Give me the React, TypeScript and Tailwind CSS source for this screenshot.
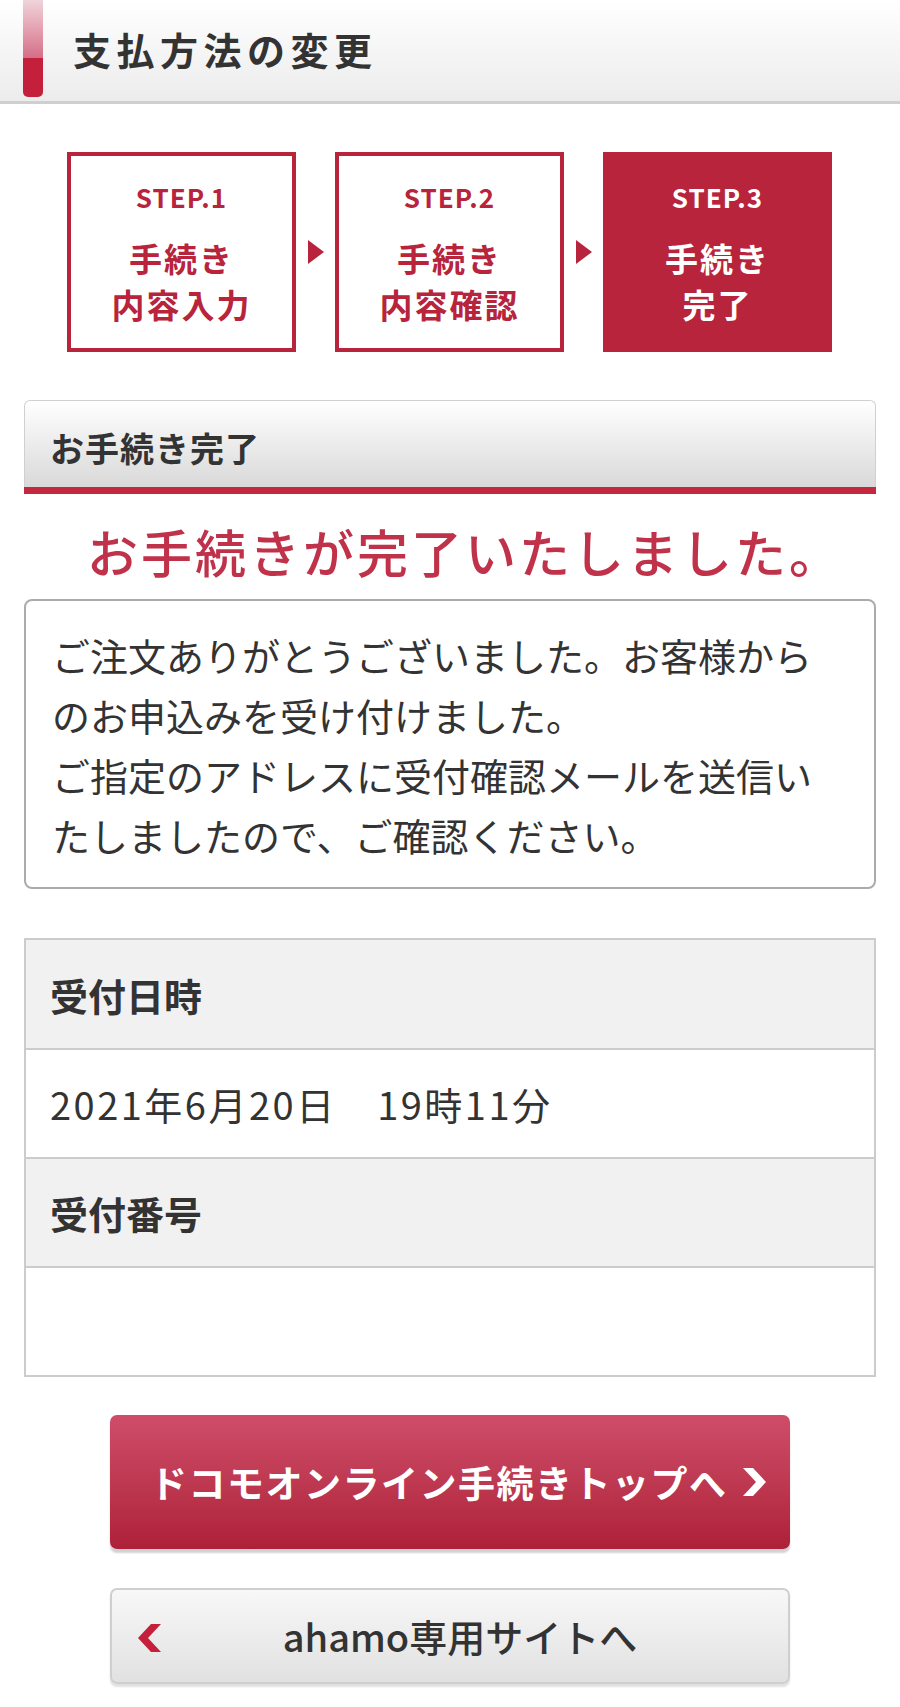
import React from "react";

const F = { fontFamily: '"Noto Sans CJK JP", "Noto Sans", sans-serif' };

function Arrow() {
  return (
    <div className="flex w-[39px] shrink-0 items-center justify-center">
      <svg width="18" height="26" viewBox="0 0 18 26">
        <polygon points="1,1 17,13 1,25" fill="#b8243b" />
      </svg>
    </div>
  );
}

function Step({ n, l1, l2, active }: { n: number; l1: string; l2: string; active?: boolean }) {
  return (
    <div
      className={
        "flex h-[200px] w-[229px] shrink-0 flex-col items-center border-[4px] border-[#b8243b] pt-[26px] " +
        (active ? "bg-[#b8243b] text-white" : "bg-white text-[#b8243b]")
      }
    >
      <div className="text-[26px] font-bold leading-[30px] tracking-[1px]">STEP.{n}</div>
      <div className="mt-[23px] flex flex-col items-center text-center text-[33px] font-bold tracking-[2px]">
        <div className="leading-[46px]">{l1}</div>
        <div className="leading-[46px]">{l2}</div>
      </div>
    </div>
  );
}

export default function App() {
  return (
    <div className="min-h-[1707px] w-[900px] bg-white text-[#333]" style={F}>
      {/* header */}
      <div className="flex h-[104px] items-start border-b-[3px] border-[#cfcfcf] bg-gradient-to-b from-white to-[#ececec]">
        <div className="ml-[23px] flex h-[97px] w-[20px] flex-col overflow-hidden rounded-b-[5px]">
          <div className="h-[58px] bg-gradient-to-b from-[#efd3db] to-[#d46e88]" />
          <div className="flex-1 bg-[#c4203c]" />
        </div>
        <div className="ml-[30px] mt-[26px] text-[38px] font-bold leading-[46px] tracking-[5.5px] text-[#333]">
          支払方法の変更
        </div>
      </div>

      {/* steps */}
      <div className="mt-[48px] flex px-[67px]">
        <Step n={1} l1="手続き" l2="内容入力" />
        <Arrow />
        <Step n={2} l1="手続き" l2="内容確認" />
        <Arrow />
        <Step n={3} l1="手続き" l2="完了" active />
      </div>

      {/* panel heading */}
      <div className="mx-[24px] mt-[48px]">
        <div className="flex h-[87px] items-center rounded-t-[6px] border border-b-0 border-[#d0d0d0] bg-gradient-to-b from-white to-[#d9d9d9] pl-[25px] pt-[8px]">
          <span className="text-[34px] font-bold leading-[40px] tracking-[1px] text-[#333]">お手続き完了</span>
        </div>
        <div className="h-[7px] bg-[#c4283f]" />
      </div>

      <div className="mt-[27px] pl-[30px] text-center text-[51px] font-medium leading-[60px] tracking-[3px] text-[#c0314a]">
        お手続きが完了いたしました。
      </div>

      {/* message box */}
      <div className="mx-[24px] mt-[18px] rounded-[8px] border-2 border-[#ababab] pb-[22px] pl-[26px] pr-[40px] pt-[24px] text-[38px] leading-[60px] text-[#333]">
        ご注文ありがとうございました。お客様からのお申込みを受け付けました。
        <br />
        ご指定のアドレスに受付確認メールを送信いたしましたので、ご確認ください。
      </div>

      {/* table */}
      <div className="mx-[24px] mt-[49px] border-2 border-[#cccccc]">
        <div className="flex h-[108px] items-center bg-[#f1f1f1] pl-[24px] text-[38px] font-bold">受付日時</div>
        <div className="flex h-[109px] items-center border-t-2 border-[#cccccc] bg-white pl-[24px] text-[38px] tracking-[2.5px]">
          2021年6月20日　19時11分
        </div>
        <div className="flex h-[109px] items-center border-t-2 border-[#cccccc] bg-[#f1f1f1] pl-[24px] text-[38px] font-bold">
          受付番号
        </div>
        <div className="h-[109px] border-t-2 border-[#cccccc] bg-white" />
      </div>

      {/* red button */}
      <div className="mx-auto mt-[38px] flex h-[134px] w-[680px] items-center rounded-[7px] bg-gradient-to-b from-[#cf4d6a] to-[#ad2038] pl-[40px] shadow-[0_4px_2px_rgba(0,0,0,0.18)]">
        <span className="text-[37px] font-bold leading-[44px] tracking-[1.5px] text-white">
          ドコモオンライン手続きトップへ
        </span>
        <svg className="ml-[12px]" width="28" height="30" viewBox="0 0 28 30">
          <polygon points="3,1 13,1 26,15 13,29 3,29 16,15" fill="#fff" />
        </svg>
      </div>

      {/* gray button */}
      <div className="relative mx-auto mt-[39px] flex h-[96px] w-[680px] items-center justify-center rounded-[7px] border-2 border-[#cfcfcf] bg-gradient-to-b from-[#f8f8f8] to-[#e1e1e1] shadow-[0_3px_2px_rgba(0,0,0,0.12)]">
        <svg className="absolute left-[24px] top-[33px]" width="28" height="30" viewBox="0 0 28 30">
          <polygon points="25,1 15,1 2,15 15,29 25,29 12,15" fill="#c4203c" />
        </svg>
        <span className="ml-[20px] text-[38px] font-medium leading-[46px] text-[#333]">ahamo専用サイトへ</span>
      </div>
    </div>
  );
}
